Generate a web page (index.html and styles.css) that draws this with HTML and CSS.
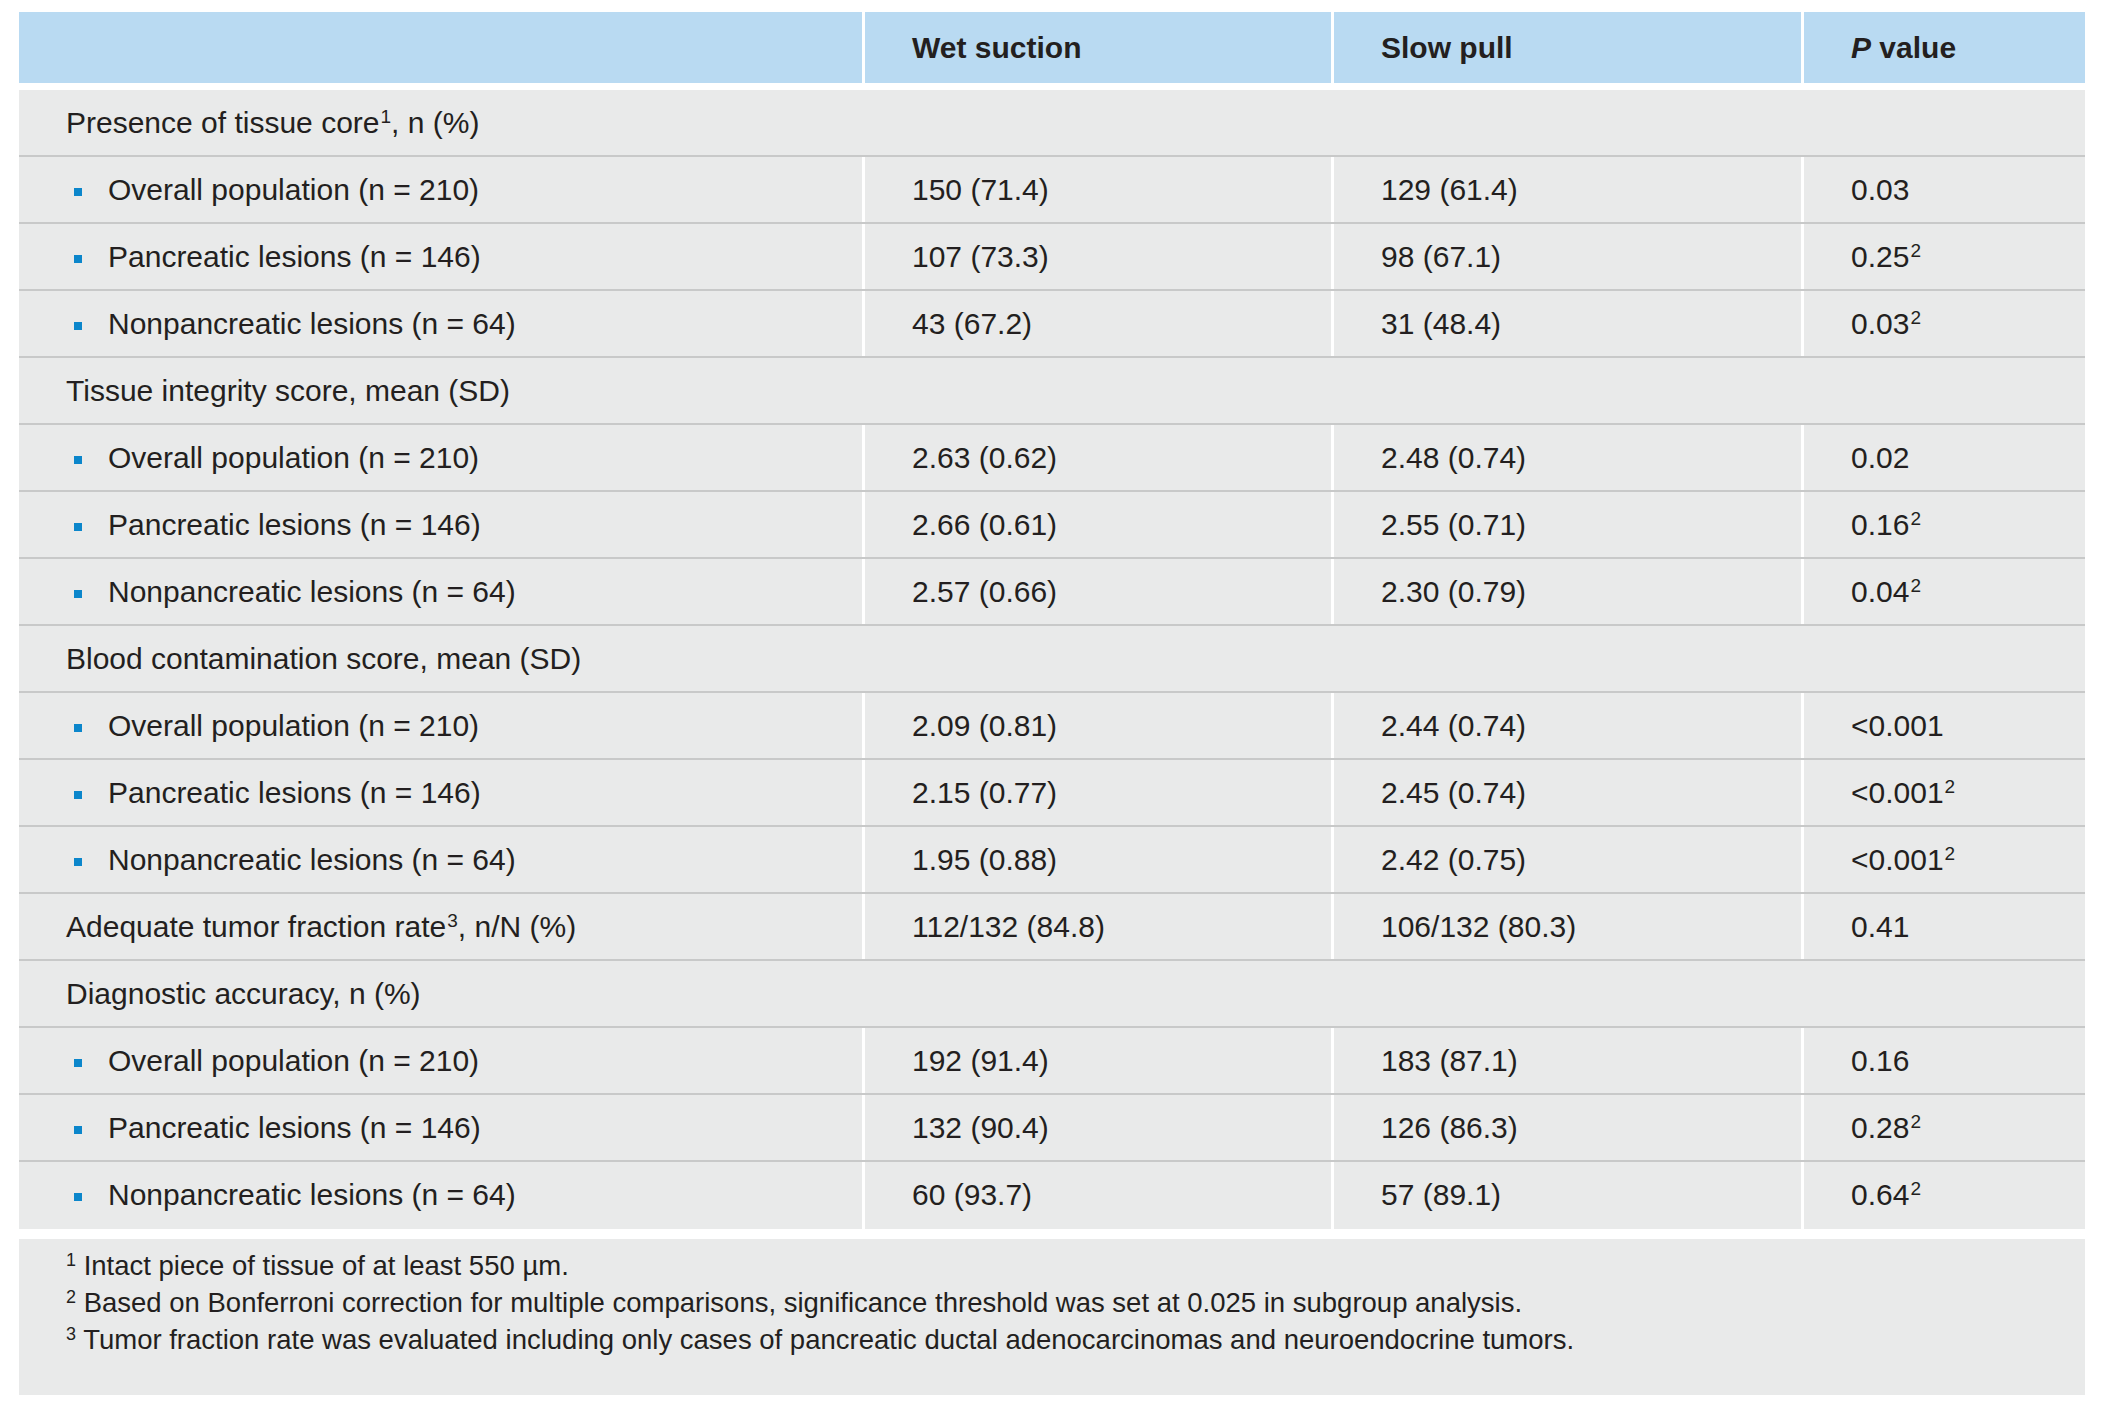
FILE: index.html
```html
<!DOCTYPE html>
<html lang="en">
<head>
<meta charset="utf-8">
<title>Wet suction vs slow pull</title>
<link rel="stylesheet" href="styles.css">
</head>
<body>
<div class="table">
  <div class="row head">
    <div class="cell"></div>
    <div class="cell">Wet suction</div>
    <div class="cell">Slow pull</div>
    <div class="cell"><i>P</i> value</div>
  </div>
  <div class="body">
    <div class="row section"><div class="cell">Presence of tissue core<sup>1</sup>, n (%)</div></div>
    <div class="row"><div class="cell"><span class="bullet"></span>Overall population (n = 210)</div><div class="cell">150 (71.4)</div><div class="cell">129 (61.4)</div><div class="cell">0.03</div></div>
    <div class="row"><div class="cell"><span class="bullet"></span>Pancreatic lesions (n = 146)</div><div class="cell">107 (73.3)</div><div class="cell">98 (67.1)</div><div class="cell">0.25<sup>2</sup></div></div>
    <div class="row"><div class="cell"><span class="bullet"></span>Nonpancreatic lesions (n = 64)</div><div class="cell">43 (67.2)</div><div class="cell">31 (48.4)</div><div class="cell">0.03<sup>2</sup></div></div>
    <div class="row section"><div class="cell">Tissue integrity score, mean (SD)</div></div>
    <div class="row"><div class="cell"><span class="bullet"></span>Overall population (n = 210)</div><div class="cell">2.63 (0.62)</div><div class="cell">2.48 (0.74)</div><div class="cell">0.02</div></div>
    <div class="row"><div class="cell"><span class="bullet"></span>Pancreatic lesions (n = 146)</div><div class="cell">2.66 (0.61)</div><div class="cell">2.55 (0.71)</div><div class="cell">0.16<sup>2</sup></div></div>
    <div class="row"><div class="cell"><span class="bullet"></span>Nonpancreatic lesions (n = 64)</div><div class="cell">2.57 (0.66)</div><div class="cell">2.30 (0.79)</div><div class="cell">0.04<sup>2</sup></div></div>
    <div class="row section"><div class="cell">Blood contamination score, mean (SD)</div></div>
    <div class="row"><div class="cell"><span class="bullet"></span>Overall population (n = 210)</div><div class="cell">2.09 (0.81)</div><div class="cell">2.44 (0.74)</div><div class="cell">&lt;0.001</div></div>
    <div class="row"><div class="cell"><span class="bullet"></span>Pancreatic lesions (n = 146)</div><div class="cell">2.15 (0.77)</div><div class="cell">2.45 (0.74)</div><div class="cell">&lt;0.001<sup>2</sup></div></div>
    <div class="row"><div class="cell"><span class="bullet"></span>Nonpancreatic lesions (n = 64)</div><div class="cell">1.95 (0.88)</div><div class="cell">2.42 (0.75)</div><div class="cell">&lt;0.001<sup>2</sup></div></div>
    <div class="row"><div class="cell">Adequate tumor fraction rate<sup>3</sup>, n/N (%)</div><div class="cell">112/132 (84.8)</div><div class="cell">106/132 (80.3)</div><div class="cell">0.41</div></div>
    <div class="row section"><div class="cell">Diagnostic accuracy, n (%)</div></div>
    <div class="row"><div class="cell"><span class="bullet"></span>Overall population (n = 210)</div><div class="cell">192 (91.4)</div><div class="cell">183 (87.1)</div><div class="cell">0.16</div></div>
    <div class="row"><div class="cell"><span class="bullet"></span>Pancreatic lesions (n = 146)</div><div class="cell">132 (90.4)</div><div class="cell">126 (86.3)</div><div class="cell">0.28<sup>2</sup></div></div>
    <div class="row last"><div class="cell"><span class="bullet"></span>Nonpancreatic lesions (n = 64)</div><div class="cell">60 (93.7)</div><div class="cell">57 (89.1)</div><div class="cell">0.64<sup>2</sup></div></div>
  </div>
  <div class="foot">
    <p><sup>1</sup> Intact piece of tissue of at least 550 µm.</p>
    <p><sup>2</sup> Based on Bonferroni correction for multiple comparisons, significance threshold was set at 0.025 in subgroup analysis.</p>
    <p><sup>3</sup> Tumor fraction rate was evaluated including only cases of pancreatic ductal adenocarcinomas and neuroendocrine tumors.</p>
  </div>
</div>
</body>
</html>
```
FILE: styles.css
```css
html, body {
  margin: 0;
  padding: 0;
  background: #ffffff;
}

body {
  font-family: "Liberation Sans", Arial, sans-serif;
  color: #231f20;
  padding: 12px 19px 0 19px;
}

.table {
  width: 2066px;
}

.row {
  display: grid;
  grid-template-columns: 843px 466px 467px 281px;
  column-gap: 3px;
  background: #ffffff;
}

.cell {
  padding-left: 47px;
  font-size: 30px;
  line-height: 65px;
  background: #e9eaea;
  white-space: nowrap;
}

.head {
  height: 69px;
}

.head .cell {
  background: #b9daf2;
  font-weight: bold;
  line-height: 71px;
}

.body {
  margin-top: 9px;
}

.body .row {
  height: 67px;
  border-bottom: 2px solid #c8c9c9;
  box-sizing: border-box;
}

.body .row.last {
  border-bottom: none;
}

.section {
  grid-template-columns: 1fr;
}

.section .cell {
  grid-column: 1 / -1;
}

.cell .bullet {
  display: inline-block;
  width: 8px;
  height: 8px;
  background: #0b86cb;
  margin-left: 8px;
  margin-right: 26px;
  vertical-align: 4px;
}

.cell sup {
  font-size: 19px;
  line-height: 0;
  vertical-align: 10px;
  margin-left: 1px;
}

.foot {
  margin-top: 10px;
  background: #e9eaea;
  height: 156px;
  box-sizing: border-box;
  padding: 8px 0 0 47px;
  font-size: 27.5px;
}

.foot p {
  margin: 0;
  line-height: 37px;
  white-space: nowrap;
}

.foot sup {
  font-size: 18px;
  line-height: 0;
  vertical-align: 9px;
}
```
